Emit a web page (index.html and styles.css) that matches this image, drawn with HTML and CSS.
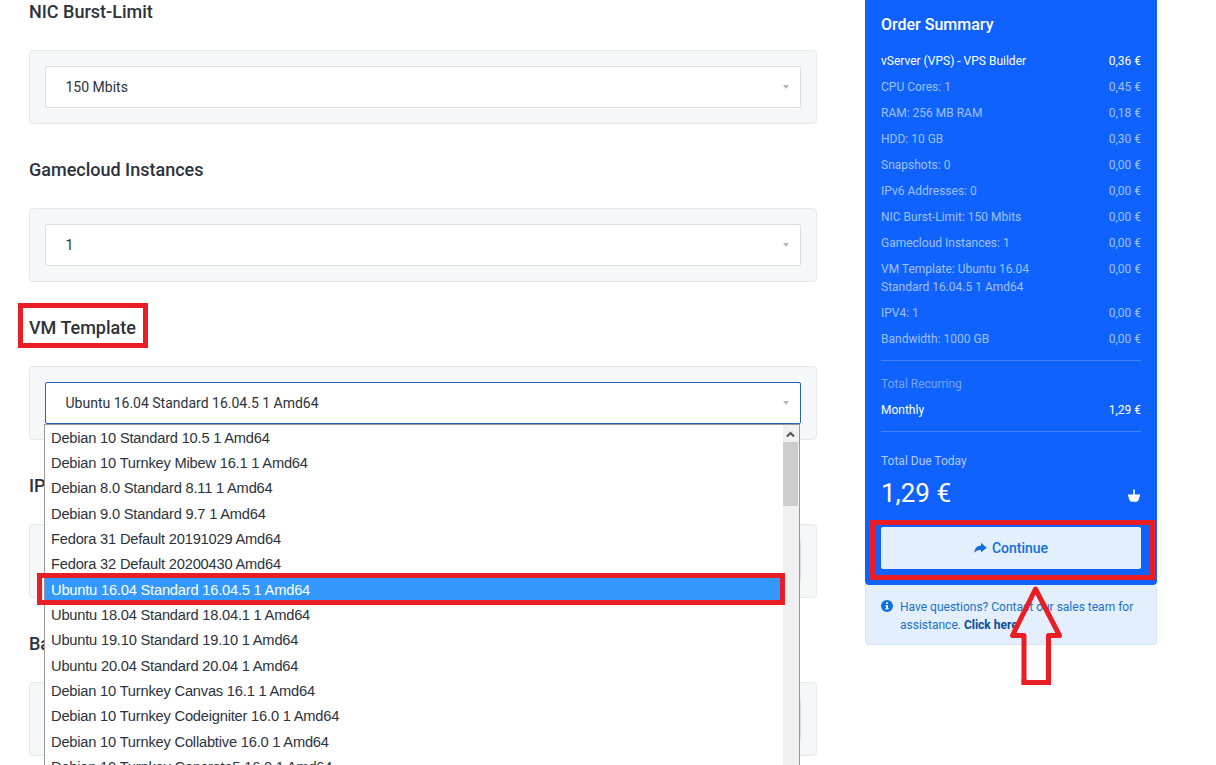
FILE: index.html
```html
<!DOCTYPE html>
<html lang="en">
<head>
<meta charset="utf-8">
<title>Configure vServer</title>
<link rel="stylesheet" href="styles.css">
</head>
<body>
<div class="page">
  <main class="options">
    <section class="option">
      <h2 class="option-title">NIC Burst-Limit</h2>
      <div class="panel"><div class="select">150 Mbits<span class="caret"></span></div></div>
    </section>
    <section class="option">
      <h2 class="option-title">Gamecloud Instances</h2>
      <div class="panel"><div class="select">1<span class="caret"></span></div></div>
    </section>
    <section class="option">
      <h2 class="option-title"><span class="marked">VM Template</span></h2>
      <div class="panel">
        <div class="select select-open">Ubuntu 16.04 Standard 16.04.5 1 Amd64<span class="caret"></span>
          <div class="dropdown">
            <ul class="list">
              <li class="item">Debian 10 Standard 10.5 1 Amd64</li>
              <li class="item">Debian 10 Turnkey Mibew 16.1 1 Amd64</li>
              <li class="item">Debian 8.0 Standard 8.11 1 Amd64</li>
              <li class="item">Debian 9.0 Standard 9.7 1 Amd64</li>
              <li class="item">Fedora 31 Default 20191029 Amd64</li>
              <li class="item">Fedora 32 Default 20200430 Amd64</li>
              <li class="item item-active">Ubuntu 16.04 Standard 16.04.5 1 Amd64</li>
              <li class="item">Ubuntu 18.04 Standard 18.04.1 1 Amd64</li>
              <li class="item">Ubuntu 19.10 Standard 19.10 1 Amd64</li>
              <li class="item">Ubuntu 20.04 Standard 20.04 1 Amd64</li>
              <li class="item">Debian 10 Turnkey Canvas 16.1 1 Amd64</li>
              <li class="item">Debian 10 Turnkey Codeigniter 16.0 1 Amd64</li>
              <li class="item">Debian 10 Turnkey Collabtive 16.0 1 Amd64</li>
              <li class="item">Debian 10 Turnkey Concrete5 16.0 1 Amd64</li>
            </ul>
            <div class="scrollbar">
              <svg class="scroll-up" width="15" height="17" viewBox="0 0 15 17"><path d="M4 11.500 L7.500 8 L11 11.500" fill="none" stroke="#505050" stroke-width="2"/></svg>
              <div class="thumb"></div>
            </div>
          </div>
        </div>
      </div>
    </section>
    <section class="option">
      <h2 class="option-title">IP</h2>
      <div class="panel"><div class="select"><span class="caret"></span></div></div>
    </section>
    <section class="option">
      <h2 class="option-title">Ba</h2>
      <div class="panel"><div class="select"><span class="caret"></span></div></div>
    </section>
  </main>

  <aside class="sidebar">
    <div class="summary">
      <h3 class="summary-title">Order Summary</h3>
      <div class="lines">
        <div class="line line-strong"><span class="name">vServer (VPS) - VPS Builder</span><span>0,36 €</span></div>
        <div class="line"><span class="name">CPU Cores: 1</span><span>0,45 €</span></div>
        <div class="line"><span class="name">RAM: 256 MB RAM</span><span>0,18 €</span></div>
        <div class="line"><span class="name">HDD: 10 GB</span><span>0,30 €</span></div>
        <div class="line"><span class="name">Snapshots: 0</span><span>0,00 €</span></div>
        <div class="line"><span class="name">IPv6 Addresses: 0</span><span>0,00 €</span></div>
        <div class="line"><span class="name">NIC Burst-Limit: 150 Mbits</span><span>0,00 €</span></div>
        <div class="line"><span class="name">Gamecloud Instances: 1</span><span>0,00 €</span></div>
        <div class="line"><span class="name">VM Template: Ubuntu 16.04 Standard 16.04.5 1 Amd64</span><span>0,00 €</span></div>
        <div class="line"><span class="name">IPV4: 1</span><span>0,00 €</span></div>
        <div class="line"><span class="name">Bandwidth: 1000 GB</span><span>0,00 €</span></div>
      </div>
      <div class="lines recurring">
        <div class="line line-faint">Total Recurring</div>
        <div class="line line-strong"><span class="name">Monthly</span><span>1,29 €</span></div>
      </div>
      <div class="due">
        <div class="due-label">Total Due Today</div>
        <div class="due-row">
          <span class="due-amount">1,29 €</span>
          <svg class="basket" width="14" height="14" viewBox="0 0 14 14"><path d="M6.200 .5h1.600v4.900H13v2.100h-.6c-.2 2.600-1 4.200-2.300 5.300H3.900C2.600 11.700 1.800 10.100 1.600 7.500H1V5.400h5.200z" fill="#fff"/></svg>
        </div>
      </div>
      <div class="action">
        <a class="continue"><svg width="13" height="12" viewBox="0 0 13 12"><path d="M7 .8 12.700 5.700 7 10.600V8C4.200 7.800 2.200 8.600.5 10.800.3 6.500 2.800 3.600 7 3.400z" fill="#1070e0"/></svg>Continue</a>
      </div>
    </div>
    <div class="help">
      <svg class="info" width="12" height="12" viewBox="0 0 12 12"><circle cx="6" cy="6" r="6" fill="#1070e0"/><path d="M5 2.200h2v1.700H5zM4.500 4.900H7v3.200h.6v1.300H4.400V8.100H5V6.200h-.5z" fill="#e3effc"/></svg>
      <p class="help-text">Have questions? Contact our sales team for assistance. <b>Click here</b></p>
      <svg class="pointer" width="54" height="101" viewBox="0 0 54 101"><path d="M26.500 4 3.500 50.500H15V97.500H39.500V50.500H50.500z" fill="none" stroke="#e91e25" stroke-width="5" stroke-linejoin="round"/><path d="M12.500 94h5v6h-5zM37 94h5v6h-5z" fill="#e91e25"/></svg>
    </div>
  </aside>
</div>
</body>
</html>
```

FILE: styles.css
```css
*, *::before, *::after { box-sizing: border-box; }
body {
  margin: 0;
  height: 765px;
  overflow: hidden;
  background: #fff;
  color: #2b323d;
  font-family: Roboto, sans-serif;
}
h2, h3, p, ul { margin: 0; padding: 0; }

.page {
  display: flex;
  align-items: flex-start;
  gap: 48px;
  height: 765px;
  padding-left: 29px;
  overflow: hidden;
}
.options {
  width: 788px;
  display: flex;
  flex-direction: column;
  gap: 34px;
}
.option-title {
  height: 24px;
  margin-bottom: 26px;
  font-size: 18px;
  line-height: 24px;
  font-weight: 500;
}
.marked { position: relative; }
.marked::after {
  content: "";
  position: absolute;
  left: -11px;
  top: -14px;
  width: 130px;
  height: 45px;
  border: 5px solid #e91e25;
}
.panel {
  height: 74px;
  padding: 15px;
  background: #f5f7f9;
  border: 1px solid #e6e9ec;
  border-radius: 4px;
}
.select {
  position: relative;
  display: flex;
  align-items: center;
  justify-content: space-between;
  height: 42px;
  padding: 0 11px 0 19.5px;
  background: #fff;
  border: 1px solid #d9dce0;
  border-radius: 2px;
  font-size: 14px;
}
.caret {
  margin-left: auto;
  border: 3px solid transparent;
  border-top: 4px solid #b4b7bb;
  border-bottom: 0;
}
.select-open { border-color: #2563b5; }

.dropdown {
  position: absolute;
  z-index: 2;
  left: -2px;
  top: 41px;
  width: 756px;
  height: 360px;
  display: flex;
  border: 1px solid #999;
  background: #fff;
}
.list {
  flex: 1;
  list-style: none;
  padding-top: 0.6px;
  font-family: "Liberation Sans", Arial, sans-serif;
  font-size: 14.67px;
  letter-spacing: -0.2px;
}
.item {
  position: relative;
  height: 25.33px;
  padding-left: 6px;
  line-height: 25.33px;
  white-space: nowrap;
}
.item-active { background: #3399ff; color: #fff; }
.item-active::after {
  content: "";
  position: absolute;
  left: -8px;
  top: -4.6px;
  width: 748px;
  height: 32px;
  border: 5px solid #e91e25;
}
.scrollbar { width: 16px; background: #f0f0f0; }
.scroll-up { display: block; }
.thumb { width: 15px; height: 64px; background: #cdcdcd; }

.sidebar { width: 292px; }
.summary {
  position: relative;
  height: 585px;
  padding: 15px 16px 0;
  background: #0f62fe;
  border-radius: 0 0 4px 4px;
  color: #fff;
}
.summary-title {
  margin-bottom: 17px;
  font-size: 16px;
  line-height: 20px;
  font-weight: 500;
}
.lines {
  display: flex;
  flex-direction: column;
  gap: 8px;
  padding-bottom: 12px;
  border-bottom: 1px solid #3f81fe;
  font-size: 12px;
  line-height: 18px;
}
.line {
  display: flex;
  justify-content: space-between;
  color: #9fc0ff;
}
.name { max-width: 170px; }
.line-strong { color: #fff; }
.line-faint { color: #73a4ff; }
.recurring { padding-top: 14px; }
.due { padding-top: 20px; }
.due-label { font-size: 12px; line-height: 18px; color: #afcbff; }
.due-row {
  display: flex;
  align-items: center;
  justify-content: space-between;
  height: 46px;
}
.due-amount { font-size: 26px; }
.basket { margin-top: 6px; }
.action { position: relative; z-index: 1; padding-top: 11px; }
.action::after {
  content: "";
  position: absolute;
  left: -11px;
  top: 4px;
  width: 285px;
  height: 60px;
  border: 5px solid #e91e25;
}
.continue {
  display: flex;
  align-items: center;
  justify-content: center;
  gap: 5px;
  height: 42px;
  background: #e3effc;
  border-radius: 2px;
  color: #1070e0;
  font-size: 14px;
  font-weight: 500;
}
.help {
  position: relative;
  display: flex;
  gap: 7px;
  height: 60px;
  padding: 13px 15px;
  background: #e3effc;
  border: 1px solid #d3e4f6;
  border-top: 0;
  border-radius: 0 0 4px 4px;
  color: #1b6fc9;
  font-size: 12px;
  line-height: 18px;
}
.info { flex: none; margin-top: 2px; }
.help-text b { color: #0c4c98; font-weight: 700; }
.pointer { position: absolute; left: 143px; top: 0; }
```
